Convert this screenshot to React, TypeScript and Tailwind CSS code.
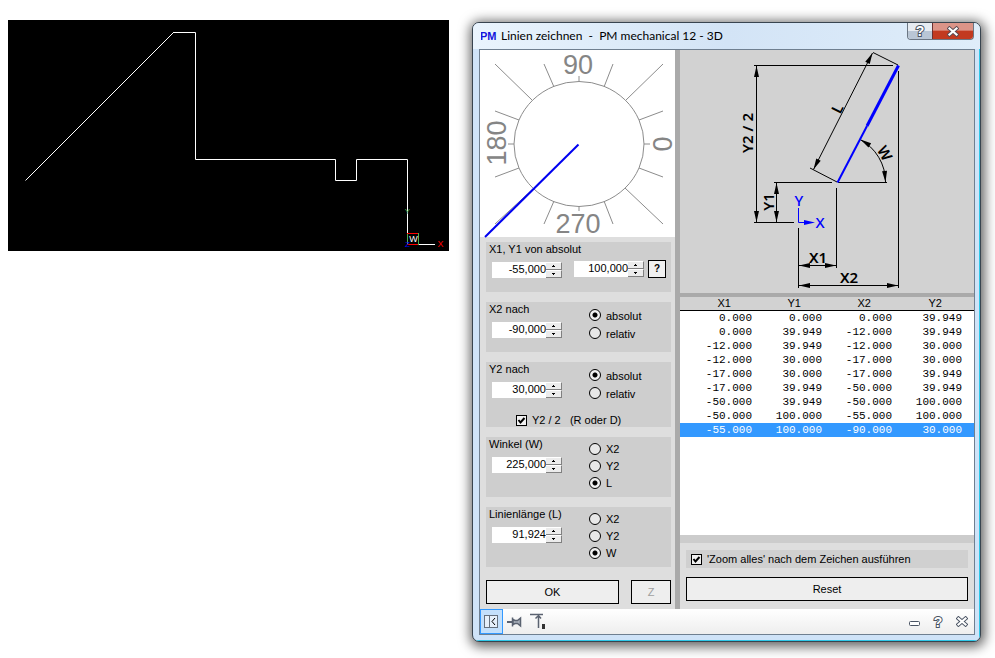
import { useState } from 'react';
import type { ReactNode } from 'react';

const ROWS = [
  ['0.000', '0.000', '0.000', '39.949'],
  ['0.000', '39.949', '-12.000', '39.949'],
  ['-12.000', '39.949', '-12.000', '30.000'],
  ['-12.000', '30.000', '-17.000', '30.000'],
  ['-17.000', '30.000', '-17.000', '39.949'],
  ['-17.000', '39.949', '-50.000', '39.949'],
  ['-50.000', '39.949', '-50.000', '100.000'],
  ['-50.000', '100.000', '-55.000', '100.000'],
  ['-55.000', '100.000', '-90.000', '30.000'],
];

// x1, y1, x2, y2 of the scale marks round the dial
const TICKS = [
  [15, 14, 52, 50], [64, 14, 74, 37], [99, 26, 99, 31], [133, 14, 124, 37], [183, 14, 146, 50],
  [15, 61, 39, 70], [183, 61, 159, 70], [28, 94, 34, 94], [164, 94, 170, 94],
  [15, 127, 39, 118], [183, 127, 159, 118],
  [15, 174, 53, 139], [64, 174, 74, 151], [99, 156, 99, 161], [133, 174, 124, 151], [183, 174, 145, 138],
];

function DrawingCanvas() {
  return (
    <svg viewBox="0 0 441 231" className="block w-full bg-black font-['Liberation_Sans',sans-serif]">
      <polyline points="17.5,160.5 165.5,12.5" fill="none" stroke="#fff" />
      <polyline
        points="165,12.5 187.5,12.5 187.5,139.5 327.5,139.5 327.5,160.5 348.5,160.5 348.5,139.5 399.5,139.5 399.5,214"
        fill="none"
        stroke="#fff"
      />
      <path d="M410 224.5H427" stroke="#fff" />
      <path d="M399.5 213V225M410.5 213V225" stroke="#4caf50" />
      <path d="M399 213.5H410M399 224.5H410" stroke="#f00" />
      <text x="399.5" y="194" textAnchor="middle" fontSize="8" fill="#4caf50">Y</text>
      <text x="405.5" y="222" textAnchor="middle" fontSize="9" fill="#fff">W</text>
      <text x="399.5" y="227" textAnchor="middle" fontSize="8" fill="#00f">Z</text>
      <text x="432.5" y="227" textAnchor="middle" fontSize="9" fill="#f00">X</text>
    </svg>
  );
}

function AngleDial() {
  return (
    <svg viewBox="0 0 195 187" className="block w-full overflow-visible bg-white font-['Liberation_Sans',sans-serif]">
      <ellipse cx="99" cy="94" rx="65" ry="62.5" fill="none" stroke="#8c8c8c" />
      {TICKS.map(([x1, y1, x2, y2], i) => (
        <line key={i} x1={x1} y1={y1} x2={x2} y2={y2} stroke="#8c8c8c" />
      ))}
      <g fontSize="27" fill="#858585" textAnchor="middle">
        <text x="98" y="24">90</text>
        <text x="98" y="183">270</text>
        <text transform="translate(26 93) rotate(-90)">180</text>
        <text transform="translate(192 94) rotate(-90)">0</text>
      </g>
      <path d="M98.500 94.500 5 187" stroke="#0000f0" strokeWidth="2" />
    </svg>
  );
}

function Arrow({ x, y, angle, color = '#000' }: { x: number; y: number; angle: number; color?: string }) {
  return <path d="M0 0 -11 -2.500V2.500Z" fill={color} transform={`translate(${x} ${y}) rotate(${angle})`} />;
}

function DimensionSketch() {
  return (
    <svg viewBox="0 0 294 243" className="block w-full bg-[#d2d2d2] font-['Noto_Sans',sans-serif]">
      <g stroke="#000" fill="none">
        <path d="M76.500 15.500V172.500M74 15.500H213M74 172.500H114" />
        <path d="M96.500 132.500V172.500M94 132.500H152M158 132.500H207" />
        <path d="M218.500 21V238M156.500 138V218M118.500 178V238" />
        <path d="M118.500 215.500H156.500M118.500 235.500H218.500" />
        <path d="M133.500 119.500 192.500 3M130 118 157 132M193 2.500 218 15" />
        <path d="M180 89.500A48 48 0 0 1 205.500 132" />
      </g>
      <Arrow x={76.5} y={16} angle={-90} />
      <Arrow x={76.5} y={172} angle={90} />
      <Arrow x={96.5} y={133} angle={-90} />
      <Arrow x={96.5} y={172} angle={90} />
      <Arrow x={119} y={215.5} angle={180} />
      <Arrow x={156} y={215.5} angle={0} />
      <Arrow x={119} y={235.5} angle={180} />
      <Arrow x={218} y={235.5} angle={0} />
      <Arrow x={192.5} y={3} angle={-63} />
      <Arrow x={133.5} y={119.5} angle={117} />
      <Arrow x={180.5} y={89.5} angle={212} />
      <Arrow x={205.5} y={132} angle={85} />
      <path d="M157.500 132.500 187 76" stroke="#00f" strokeWidth="2" />
      <path d="M187 76 218.500 15.500" stroke="#00f" strokeWidth="3" />
      <path d="M118.500 158V172.500H132" stroke="#00f" fill="none" />
      <Arrow x={135} y={172.5} angle={0} color="#00f" />
      <g fontSize="15" fontWeight="600" textAnchor="middle">
        <text transform="translate(73 83) rotate(-90)">Y2 / 2</text>
        <text transform="translate(94 152) rotate(-90)">Y1</text>
        <text x="138" y="213">X1</text>
        <text x="169" y="233">X2</text>
        <text transform="translate(162 61) rotate(-63)">L</text>
        <text transform="translate(200 106) rotate(60)">W</text>
        <g fill="#00f" fontWeight="500">
          <text x="119" y="156">Y</text>
          <text x="140" y="178">X</text>
        </g>
      </g>
    </svg>
  );
}

function NumberField({ label, value }: { label: string; value: string }) {
  return (
    <div className="flex h-4 w-[70px]">
      <input
        aria-label={label}
        defaultValue={value}
        className="w-0 min-w-0 flex-1 bg-white pb-0.5 text-right outline-none"
      />
      <div className="flex w-4 flex-col">
        {['up', 'down'].map((dir) => (
          <button
            key={dir}
            aria-label={`${label} ${dir}`}
            className="flex flex-1 items-center justify-center border-t border-r border-b border-t-white border-r-[#808080] border-b-[#808080] bg-[#ececec]"
          >
            <svg width="5" height="3" viewBox="0 0 5 3" shapeRendering="crispEdges">
              <path d={dir === 'up' ? 'M2 0H3V1H4V2H1V1H2Z' : 'M1 0H4V1H3V2H2V1H1Z'} />
            </svg>
          </button>
        ))}
      </div>
    </div>
  );
}

function RadioGroup({ name, options, initial, dense }: { name: string; options: string[]; initial: string; dense?: boolean }) {
  const [value, setValue] = useState(initial);
  return (
    <div className={`flex flex-col ${dense ? 'pt-[3px]' : 'pt-1'}`}>
      {options.map((o) => (
        <label key={o} className={`flex items-center gap-[5px] ${dense ? 'h-[17px]' : 'h-[18px]'}`}>
          <input
            type="radio"
            name={name}
            checked={value === o}
            onChange={() => setValue(o)}
            className="size-3 appearance-none rounded-full border border-black bg-[#e8e8e8] checked:bg-[radial-gradient(circle,#000_2px,#f0f0f0_3px)]"
          />
          <span className="pt-0.5">{o}</span>
        </label>
      ))}
    </div>
  );
}

function CheckBox({ children }: { children: ReactNode }) {
  return (
    <label className="flex items-center gap-[5px] whitespace-pre">
      <span className="relative size-[11px]">
        <input
          type="checkbox"
          defaultChecked
          className="peer block size-[11px] appearance-none border border-black bg-[#f0f0f0]"
        />
        <svg viewBox="0 0 11 11" className="pointer-events-none absolute inset-0 hidden peer-checked:block">
          <path d="M2.500 5 4.500 7.500 8.500 3" fill="none" stroke="#000" strokeWidth="2" />
        </svg>
      </span>
      {children}
    </label>
  );
}

function Group({ title, className, children }: { title: string; className: string; children: ReactNode }) {
  return (
    <fieldset aria-label={title} className={`bg-[#cecece] ${className}`}>
      {children}
    </fieldset>
  );
}

function ValueColumn({ title, value }: { title: string; value: string }) {
  return (
    <div className="w-[103px] shrink-0">
      <div className="h-5 pl-[3px] leading-[14px]">{title}</div>
      <div className="pl-1.5">
        <NumberField label={title} value={value} />
      </div>
    </div>
  );
}

function CloseGlyph({ dark }: { dark: string }) {
  return (
    <svg viewBox="0 0 12 11" width="12" height="11">
      <path d="M2.500 2.500 9.500 8.500M9.500 2.500 2.500 8.500" stroke={dark} strokeWidth="4" strokeLinecap="square" />
      <path d="M2.500 2.500 9.500 8.500M9.500 2.500 2.500 8.500" stroke="#fff" strokeWidth="2.200" strokeLinecap="square" />
    </svg>
  );
}

function HelpGlyph() {
  return (
    <svg viewBox="0 0 12 14" width="12" height="14" className="font-['Liberation_Sans',sans-serif]">
      <text
        x="6"
        y="12"
        textAnchor="middle"
        fontSize="14"
        fontWeight="700"
        fill="#fff"
        stroke="#4a5464"
        strokeWidth="2"
        paintOrder="stroke"
      >
        ?
      </text>
    </svg>
  );
}

function TitleBar() {
  return (
    <header className="flex h-[26px] items-start bg-linear-to-r from-[#eaf4fd] via-[#d3e4f6] to-[#dfedfa] pr-1.5 pl-2">
      <svg viewBox="0 0 18 17" width="18" height="17" className="mt-[5px] font-['Liberation_Sans',sans-serif]">
        <text x="-1" y="12" fontSize="11" fontWeight="700" fill="#1414dc">PM</text>
      </svg>
      <h1 className="mt-1 ml-0.5 flex-1 font-['Lato',sans-serif] text-xs leading-[18px] whitespace-pre text-black">
        {'Linien zeichnen  -  PM mechanical 12 - 3D'}
      </h1>
      <div className="flex h-[17px] overflow-hidden rounded-b-[4px] border border-t-0 border-[#6b7683]">
        <button aria-label="Hilfe" className="flex w-6 items-center justify-center bg-linear-to-b from-[#e6ebf1] from-50% to-[#b9c6d5] to-50%">
          <HelpGlyph />
        </button>
        <button aria-label="Schließen" className="flex w-[41px] items-center justify-center border-l border-[#6b3030] bg-linear-to-b from-[#dc9488] from-45% to-[#c23a20] to-50%">
          <CloseGlyph dark="#5a4a52" />
        </button>
      </div>
    </header>
  );
}

function LeftPanel() {
  return (
    <section className="w-[195px] shrink-0 bg-[#dedede]">
      <AngleDial />
      <div className="flex flex-col gap-2.5 pt-[5px] pr-1 pb-[5px] pl-1.5">
        <Group title="X1, Y1" className="h-[50px]">
          <div className="h-5 pl-[3px] leading-[14px]">X1, Y1 von absolut</div>
          <div className="flex items-center gap-3 pl-1.5">
            <NumberField label="X1" value="-55,000" />
            <div className="-mt-0.5 flex items-center gap-1">
              <NumberField label="Y1" value="100,000" />
              <button className="size-[18px] border border-black bg-[#f0f0f0] text-[10px] leading-4 font-bold">?</button>
            </div>
          </div>
        </Group>
        <Group title="X2" className="flex h-[50px]">
          <ValueColumn title="X2 nach" value="-90,000" />
          <RadioGroup name="x2" options={['absolut', 'relativ']} initial="absolut" />
        </Group>
        <Group title="Y2" className="h-[65px] overflow-hidden">
          <div className="flex h-[51px]">
            <ValueColumn title="Y2 nach" value="30,000" />
            <RadioGroup name="y2" options={['absolut', 'relativ']} initial="absolut" />
          </div>
          <div className="pl-[30px] leading-[14px]">
            <CheckBox>{'Y2 / 2   (R oder D)'}</CheckBox>
          </div>
        </Group>
        <Group title="Winkel" className="flex h-[60px]">
          <ValueColumn title="Winkel (W)" value="225,000" />
          <RadioGroup name="winkel" options={['X2', 'Y2', 'L']} initial="L" dense />
        </Group>
        <Group title="Länge" className="flex h-[60px]">
          <ValueColumn title="Linienlänge (L)" value="91,924" />
          <RadioGroup name="laenge" options={['X2', 'Y2', 'W']} initial="W" dense />
        </Group>
        <div className="mt-[3px] flex gap-3">
          <button className="h-6 flex-1 border border-black bg-[#eeeeee]">OK</button>
          <button disabled className="h-6 w-10 border border-black bg-[#eeeeee] text-[#a0a0a0]">Z</button>
        </div>
      </div>
    </section>
  );
}

function CoordinateTable() {
  return (
    <table className="w-full table-fixed border-separate border-spacing-0">
      <colgroup>
        <col className="w-[72px]" />
        <col className="w-[70px]" />
        <col className="w-[70px]" />
        <col />
      </colgroup>
      <thead>
        <tr className="bg-[#d2d2d2]">
          {['X1', 'Y1', 'X2', 'Y2'].map((h) => (
            <th key={h} className="h-[14px] border-b border-black p-0 pr-[21px] text-right leading-[13px] font-normal last:pr-8">
              {h}
            </th>
          ))}
        </tr>
      </thead>
      <tbody className="font-['Liberation_Mono',monospace] text-[11px] leading-[13px]">
        {ROWS.map((row, i) => (
          <tr key={i} className={i === ROWS.length - 1 ? 'bg-[#3399ff] text-white' : ''}>
            {row.map((v, j) => (
              <td key={j} className="h-[14px] p-0 pt-px text-right last:pr-3">{v}</td>
            ))}
          </tr>
        ))}
      </tbody>
    </table>
  );
}

function RightPanel() {
  return (
    <section className="flex min-w-0 flex-1 flex-col bg-[#dedede]">
      <DimensionSketch />
      <div className="h-1 bg-[#aaaaaa]" />
      <div className="flex-1 bg-white">
        <CoordinateTable />
      </div>
      <div className="h-2 bg-[#cccccc]" />
      <div className="flex flex-col gap-[9px] px-1.5 pt-[7px] pb-2">
        <div className="flex h-[18px] items-center bg-[#d0d0d0] pl-[5px]">
          <CheckBox>'Zoom alles' nach dem Zeichen ausführen</CheckBox>
        </div>
        <button className="h-6 border border-black bg-[#eeeeee]">Reset</button>
      </div>
    </section>
  );
}

function StatusBar() {
  return (
    <footer className="flex h-[25px] items-center bg-linear-to-b from-white to-[#eeeeee]">
      <button aria-label="Panel einklappen" className="flex h-[25px] w-[23px] items-center justify-center border border-[#3399ff] bg-[#c4e0fb]">
        <svg width="15" height="14" viewBox="0 0 15 14" fill="none" shapeRendering="crispEdges">
          <path d="M.500 .500H13.500V12.500H.500ZM5.500 .500V12.500" stroke="#66717e" fill="#e6f0fa" />
          <path d="M11 3 8 6.500 11 10" stroke="#000" shapeRendering="auto" />
        </svg>
      </button>
      <button aria-label="Anheften" className="ml-1">
        <svg width="15" height="12" viewBox="0 0 15 12">
          <path d="M0 6H5" stroke="#5a6270" strokeWidth="2" />
          <path d="M5.500 1.500V10.500" stroke="#5a6270" strokeWidth="1.500" />
          <path d="M6 3.500 8 4.500H10.500L13.500 2V10L10.500 7.500H8L6 8.500Z" fill="#a9b0bb" stroke="#5a6270" strokeWidth="1.500" />
        </svg>
      </button>
      <button aria-label="Oben ausrichten" className="ml-2">
        <svg width="17" height="17" viewBox="0 0 17 17">
          <path d="M0 1.500H13" stroke="#5a6270" strokeWidth="1.500" />
          <path d="M8.500 3V15M5.500 5.500 8.500 2.500 11 5.500" fill="none" stroke="#5a6270" strokeWidth="1.500" />
          <path d="M12 11H15V16H12Z" fill="#333" />
        </svg>
      </button>
      <div className="ml-auto flex items-center gap-3 pr-1.5">
        <button aria-label="Minimieren" className="mt-1">
          <svg width="11" height="5" viewBox="0 0 11 5">
            <rect x=".5" y=".5" width="10" height="4" rx="1" fill="#fff" stroke="#4a5464" />
          </svg>
        </button>
        <button aria-label="Hilfe">
          <HelpGlyph />
        </button>
        <button aria-label="Schließen">
          <CloseGlyph dark="#4a5464" />
        </button>
      </div>
    </footer>
  );
}

export default function App() {
  return (
    <main className="grid grid-cols-[441fr_509fr] items-start gap-[23px] bg-white pt-5 pr-[14px] pb-4 pl-2 font-['Liberation_Sans',sans-serif] text-[11px] text-black">
      <DrawingCanvas />
      <div className="mt-0.5 overflow-hidden rounded-[7px] border border-[#38444f] bg-[#cfe3f8] shadow-[1px_2px_12px_3px_rgba(0,0,0,0.6)]">
        <TitleBar />
        <div className="border-r border-b border-[#2fc8e8] pr-1 pb-[5px] pl-1.5">
          <div className="border border-[#6f7f90]">
            <div className="flex">
              <LeftPanel />
              <div className="w-[5px] bg-[#aaaaaa]" />
              <RightPanel />
            </div>
            <StatusBar />
          </div>
        </div>
      </div>
    </main>
  );
}
